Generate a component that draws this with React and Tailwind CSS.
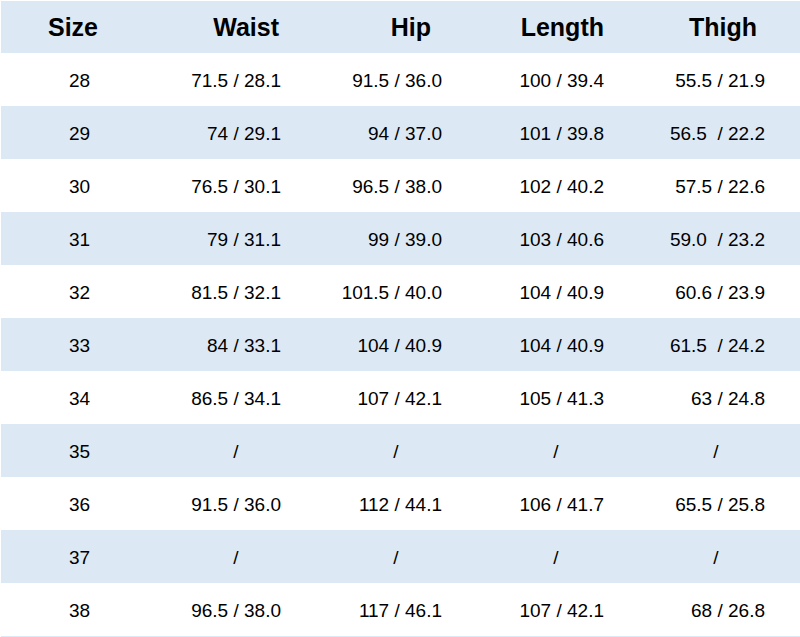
const rows = [
  ["28", "71.5 / 28.1", "91.5 / 36.0", "100 / 39.4", "55.5 / 21.9"],
  ["29", "74 / 29.1", "94 / 37.0", "101 / 39.8", "56.5  / 22.2"],
  ["30", "76.5 / 30.1", "96.5 / 38.0", "102 / 40.2", "57.5 / 22.6"],
  ["31", "79 / 31.1", "99 / 39.0", "103 / 40.6", "59.0  / 23.2"],
  ["32", "81.5 / 32.1", "101.5 / 40.0", "104 / 40.9", "60.6 / 23.9"],
  ["33", "84 / 33.1", "104 / 40.9", "104 / 40.9", "61.5  / 24.2"],
  ["34", "86.5 / 34.1", "107 / 42.1", "105 / 41.3", "63 / 24.8"],
  ["35", "/", "/", "/", "/"],
  ["36", "91.5 / 36.0", "112 / 44.1", "106 / 41.7", "65.5 / 25.8"],
  ["37", "/", "/", "/", "/"],
  ["38", "96.5 / 38.0", "117 / 46.1", "107 / 42.1", "68 / 26.8"],
];

// right padding for each value column (waist, hip, length, thigh)
const valuePad = ["pr-[39px]", "pr-[38px]", "pr-[36px]", "pr-[35px]"];

function ValueCell({ text, i }) {
  if (text === "/") {
    return (
      <div className="w-[160px] flex items-center justify-center pr-2 pt-[3px]">
        {text}
      </div>
    );
  }
  return (
    <div
      className={
        "w-[160px] flex items-center justify-end whitespace-pre pt-[3px] " +
        valuePad[i]
      }
    >
      {text}
    </div>
  );
}

export default function App() {
  return (
    <div
      className="w-[800px] h-[637px] bg-white pt-px pl-px overflow-hidden text-black flex flex-col"
      style={{ fontFamily: '"Liberation Sans", Arial, sans-serif' }}
    >
      {/* header */}
      <div className="flex h-[52px] shrink-0 bg-[#dce9f5] text-[25px] font-bold pt-[2px]">
        <div className="w-[159px] flex items-center pl-[47px]">Size</div>
        <div className="w-[160px] flex items-center justify-end pr-[41px]">Waist</div>
        <div className="w-[160px] flex items-center justify-end pr-[49px]">Hip</div>
        <div className="w-[160px] flex items-center justify-end pr-[36px]">Length</div>
        <div className="w-[160px] flex items-center justify-end pr-[43px]">Thigh</div>
      </div>

      {rows.map((r, idx) => (
        <div
          key={r[0]}
          className={
            "flex h-[53px] shrink-0 text-[19px] " +
            (idx % 2 === 1 ? "bg-[#dce9f5]" : "bg-white")
          }
        >
          <div className="w-[159px] flex items-center justify-center pr-[2px] pt-[3px]">
            {r[0]}
          </div>
          {r.slice(1).map((v, i) => (
            <ValueCell key={i} text={v} i={i} />
          ))}
        </div>
      ))}

      <div className="flex-1 bg-[#dce9f5]" />
    </div>
  );
}
